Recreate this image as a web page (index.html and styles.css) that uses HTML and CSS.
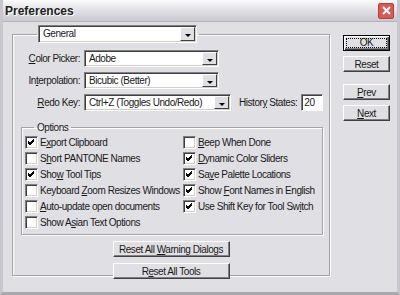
FILE: index.html
```html
<!DOCTYPE html>
<html>
<head>
    <title>Preferences</title>
    <link rel="stylesheet" href="styles.css">
</head>
<body>
    <div class="window">
        <div class="titlebar">
            <span class="title">Preferences</span>
            <span class="close">
                <svg width="9" height="9" viewBox="0 0 9 9"><path d="M1 1 L8 8 M8 1 L1 8" stroke="#fff" stroke-width="2"/></svg>
            </span>
        </div>

        <div class="content">
            <fieldset class="main-group">
                <legend>
                    <div class="combo combo-general">
                        <span class="combo-text">General</span>
                        <span class="combo-arrow"></span>
                    </div>
                </legend>

                <div class="field-row">
                    <label class="field-label"><span><u>C</u>olor Picker:</span></label>
                    <div class="combo combo-picker">
                        <span class="combo-text">Adobe</span>
                        <span class="combo-arrow"></span>
                    </div>
                </div>
                <div class="field-row">
                    <label class="field-label"><span>In<u>t</u>erpolation:</span></label>
                    <div class="combo combo-picker">
                        <span class="combo-text">Bicubic (Better)</span>
                        <span class="combo-arrow"></span>
                    </div>
                </div>
                <div class="field-row">
                    <label class="field-label"><span><u>R</u>edo Key:</span></label>
                    <div class="combo combo-redo">
                        <span class="combo-text">Ctrl+Z (Toggles Undo/Redo)</span>
                        <span class="combo-arrow"></span>
                    </div>
                    <label class="history-label"><span>Histor<u>y</u> States:</span></label>
                    <div class="text-input">20</div>
                </div>

                <fieldset class="options-group">
                    <legend>Options</legend>
                    <div class="options-grid">
                        <div class="check-col">
                            <div class="check on"><span>E<u>x</u>port Clipboard</span></div>
                            <div class="check"><span>S<u>h</u>ort PANTONE Names</span></div>
                            <div class="check on"><span>Sho<u>w</u> Tool Tips</span></div>
                            <div class="check"><span>Keyboard <u>Z</u>oom Resizes Windows</span></div>
                            <div class="check"><span><u>A</u>uto-update open documents</span></div>
                            <div class="check"><span>Show A<u>s</u>ian Text Options</span></div>
                        </div>
                        <div class="check-col">
                            <div class="check"><span><u>B</u>eep When Done</span></div>
                            <div class="check on"><span><u>D</u>ynamic Color Sliders</span></div>
                            <div class="check on"><span>Sa<u>v</u>e Palette Locations</span></div>
                            <div class="check on"><span>Show <u>F</u>ont Names in English</span></div>
                            <div class="check on"><span>Use Shift Key for Tool Sw<u>i</u>tch</span></div>
                        </div>
                    </div>
                </fieldset>

                <div class="reset-buttons">
                    <button class="btn btn-wide">Reset All <u>W</u>arning Dialogs</button>
                    <button class="btn btn-wide">R<u>e</u>set All Tools</button>
                </div>
            </fieldset>

            <div class="side-buttons">
                <button class="btn btn-default"><span class="focus">OK</span></button>
                <button class="btn">Reset</button>
                <button class="btn btn-gap"><u>P</u>rev</button>
                <button class="btn"><u>N</u>ext</button>
            </div>
        </div>
    </div>
</body>
</html>
```

FILE: styles.css
```css
body {
    margin: 0;
    width: 400px;
    height: 295px;
    overflow: hidden;
    font-family: "Liberation Sans", Arial, sans-serif;
    font-size: 10px;
    letter-spacing: -0.45px;
    color: #1a1a1a;
    background: #e0dfe3;
}

.window {
    height: 295px;
    box-sizing: border-box;
    border-left: 3px solid #c8c7cf;
    border-right: 3px solid #c8c7cf;
    border-bottom: 3px solid #a9a8b0;
    background: #e0dfe3;
}

.titlebar {
    height: 21px;
    display: flex;
    align-items: center;
    justify-content: space-between;
    padding: 0 3px 0 2px;
    background: linear-gradient(#fbfbfc, #e3e3e8 45%, #c9c8d0);
    border-bottom: 1px solid #b4b3bb;
}

.title {
    font-weight: bold;
    font-size: 12px;
    letter-spacing: 0;
    color: #222;
    text-shadow: 1px 1px 0 #fff;
}

.close {
    width: 14px;
    height: 14px;
    display: flex;
    align-items: center;
    justify-content: center;
    background: #d65a55;
    border: 1px solid #b5413d;
    border-radius: 2px;
}

.content {
    display: flex;
    padding: 3px 0 0 9px;
}

/* group boxes */
fieldset {
    margin: 0;
    border: 1px solid #a3a2a8;
    box-shadow: 1px 1px 0 #fff, inset 1px 1px 0 #fff;
}

.main-group {
    width: 318px;
    height: 251px;
    flex: none;
    box-sizing: border-box;
    padding: 0 0 0 11px;
}

.main-group > legend {
    margin-left: 13px;
    padding: 0 2px 0 1px;
}

/* combo boxes */
.combo {
    display: flex;
    flex: none;
    height: 17px;
    box-sizing: border-box;
    background: #fff;
    border: 1px solid;
    border-color: #808080 #fff #fff #808080;
    box-shadow: inset 1px 1px 0 #404040, inset -1px -1px 0 #d4d0c8;
}

.combo-text {
    flex: 1;
    padding: 2px 0 0 4px;
    white-space: nowrap;
    overflow: hidden;
}

.combo-arrow {
    width: 15px;
    margin: 1px;
    box-sizing: border-box;
    background: #e0dfe3;
    border: 1px solid;
    border-color: #fff #404040 #404040 #fff;
    position: relative;
}

.combo-arrow::after {
    content: "";
    position: absolute;
    left: 4px;
    top: 6px;
    border-left: 3px solid transparent;
    border-right: 3px solid transparent;
    border-top: 3px solid #000;
}

.combo-general { width: 159px; height: 18px; }
.combo-picker { width: 135px; }
.combo-redo { width: 147px; }

.field-row {
    display: flex;
    align-items: center;
    height: 17px;
    margin-top: 5px;
    white-space: nowrap;
}

.main-group > legend + .field-row {
    margin-top: 7px;
}

.field-label {
    width: 58px;
    flex: none;
    text-align: right;
    padding-right: 4px;
    box-sizing: border-box;
    margin-left: 2px;
}

.history-label {
    margin-left: 8px;
    margin-right: 4px;
}

.text-input {
    width: 22px;
    height: 17px;
    flex: none;
    box-sizing: border-box;
    padding: 2px 0 0 2px;
    background: #fff;
    border: 1px solid;
    border-color: #808080 #fff #fff #808080;
    box-shadow: inset 1px 1px 0 #404040;
}

/* options */
.options-group {
    width: 302px;
    height: 113px;
    box-sizing: border-box;
    margin: 11px 0 0 -3px;
    padding: 0 0 0 3px;
}

.options-group > legend {
    margin-left: 9px;
    padding: 0 3px;
}

.options-grid {
    display: grid;
    grid-template-columns: 158px 1fr;
    margin-top: 1px;
}

.check {
    height: 16px;
    display: flex;
    align-items: center;
    white-space: nowrap;
}

.check::before {
    content: "";
    flex: none;
    width: 13px;
    height: 13px;
    box-sizing: border-box;
    margin-right: 2px;
    background: #fff;
    border: 1px solid;
    border-color: #808080 #fff #fff #808080;
    box-shadow: inset 1px 1px 0 #404040, inset -1px -1px 0 #d4d0c8;
}

.check.on::before {
    background: #fff url("data:image/svg+xml,%3Csvg xmlns='http://www.w3.org/2000/svg' width='11' height='11'%3E%3Cpath d='M2 4 L4 6 L8 2 M2 5 L4 7 L8 3 M2 6 L4 8 L8 4' stroke='%23000' fill='none'/%3E%3C/svg%3E") no-repeat 0 0;
}

/* buttons */
.btn {
    font-family: inherit;
    font-size: 10px;
    letter-spacing: -0.45px;
    color: #1a1a1a;
    height: 16px;
    padding: 0;
    white-space: nowrap;
    background: #e0dfe3;
    border: 1px solid;
    border-color: #fff #404040 #404040 #fff;
    box-shadow: inset -1px -1px 0 #808080;
}

.reset-buttons {
    display: flex;
    flex-direction: column;
    align-items: center;
    gap: 6px;
    margin: 6px 0 0 -11px;
}

.btn-wide { width: 117px; }

.side-buttons {
    display: flex;
    flex-direction: column;
    gap: 5px;
    margin: 10px 0 0 13px;
}

.side-buttons .btn {
    width: 47px;
    height: 16px;
}

.btn-default {
    border: 1px solid #000;
    box-shadow: inset 1px 1px 0 #fff, inset -1px -1px 0 #404040, inset -2px -2px 0 #808080;
    display: flex;
    align-items: stretch;
}

.focus {
    flex: 1;
    margin: 2px;
    border: 1px dotted #000;
    line-height: 8px;
}

.btn-gap { margin-top: 7px; }
```
